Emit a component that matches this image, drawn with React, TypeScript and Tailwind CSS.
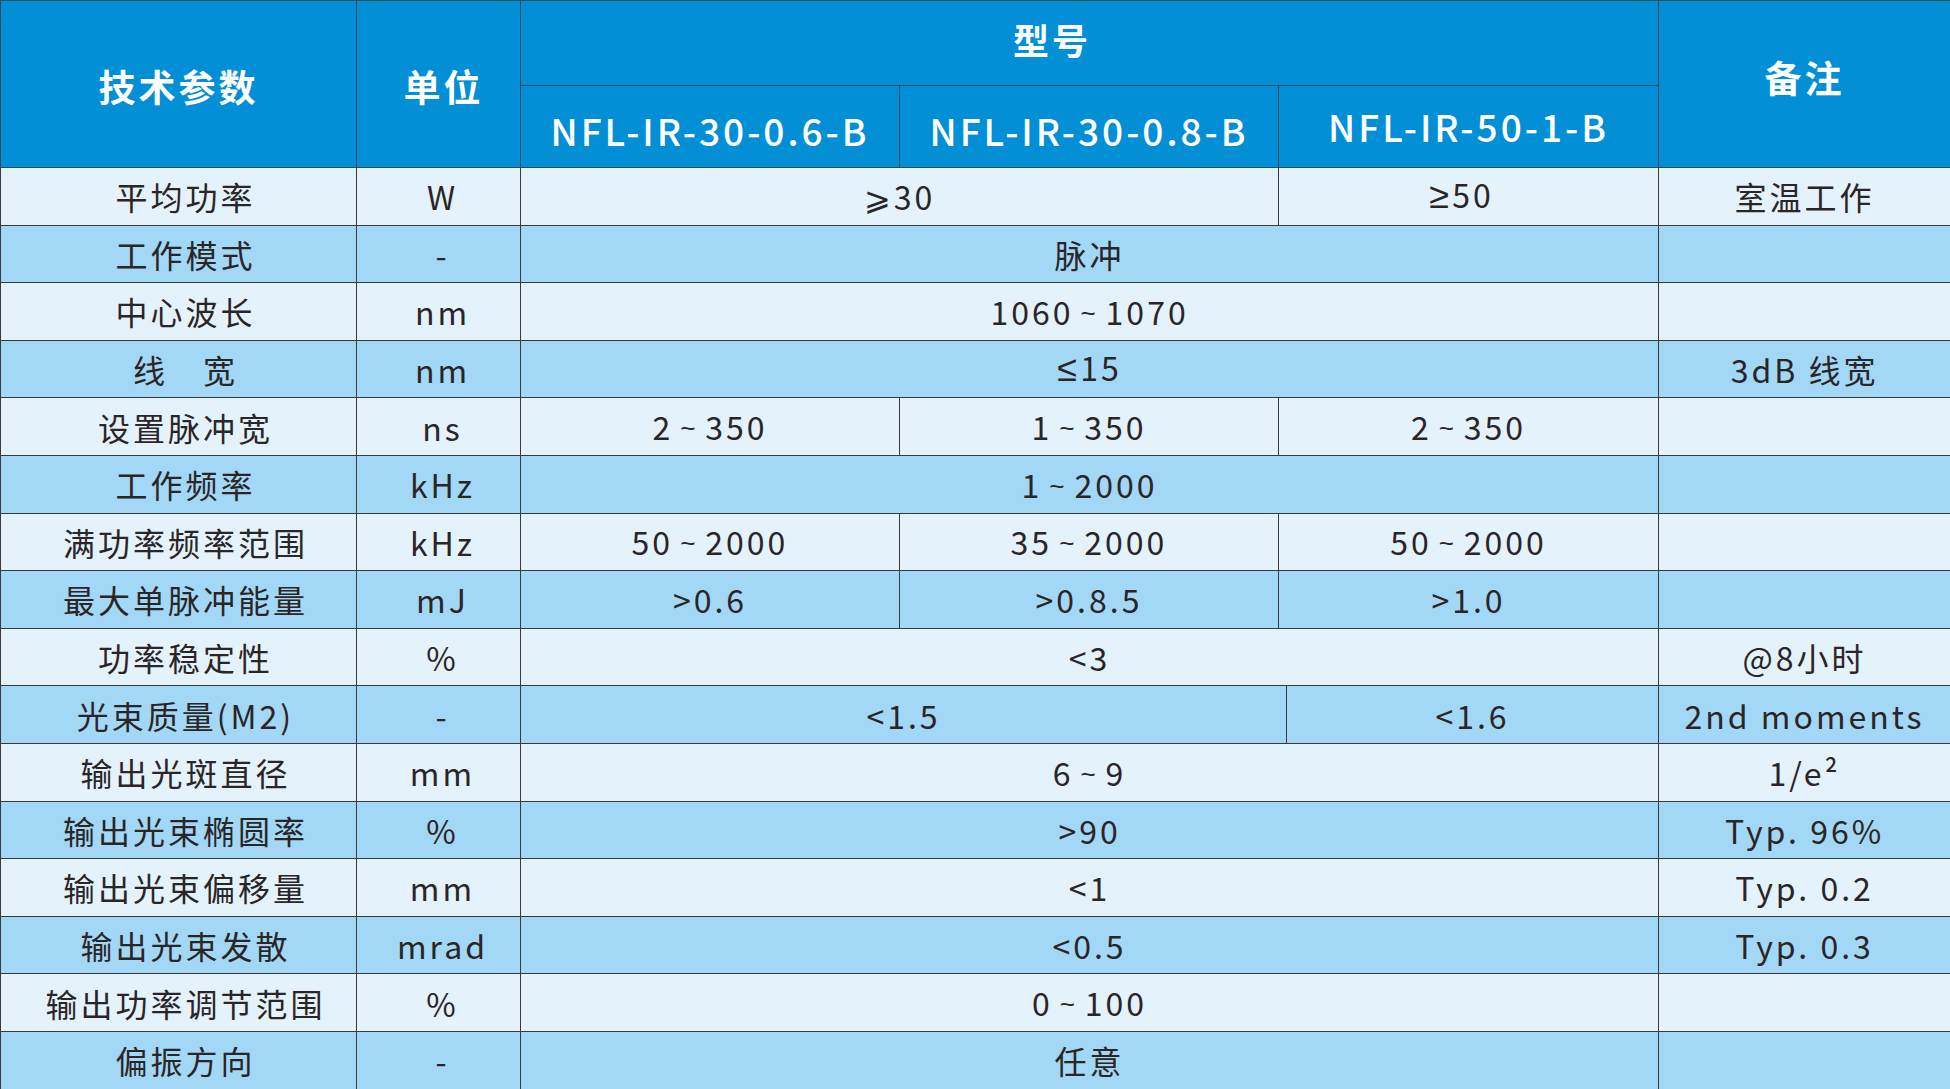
type Cell = { text: string; span?: number };
type Row = { name: string; unit: string; cells: Cell[]; note: string };

const rows: Row[] = [
  { name: "平均功率", unit: "W", cells: [{ text: "⩾30", span: 2 }, { text: "≥50" }], note: "室温工作" },
  { name: "工作模式", unit: "-", cells: [{ text: "脉冲", span: 3 }], note: "" },
  { name: "中心波长", unit: "nm", cells: [{ text: "1060～1070", span: 3 }], note: "" },
  { name: "线　宽", unit: "nm", cells: [{ text: "≤15", span: 3 }], note: "3dB 线宽" },
  { name: "设置脉冲宽", unit: "ns", cells: [{ text: "2～350" }, { text: "1～350" }, { text: "2～350" }], note: "" },
  { name: "工作频率", unit: "kHz", cells: [{ text: "1～2000", span: 3 }], note: "" },
  { name: "满功率频率范围", unit: "kHz", cells: [{ text: "50～2000" }, { text: "35～2000" }, { text: "50～2000" }], note: "" },
  { name: "最大单脉冲能量", unit: "mJ", cells: [{ text: ">0.6" }, { text: ">0.8.5" }, { text: ">1.0" }], note: "" },
  { name: "功率稳定性", unit: "%", cells: [{ text: "<3", span: 3 }], note: "@8小时" },
  { name: "光束质量(M2)", unit: "-", cells: [{ text: "<1.5", span: 2 }, { text: "<1.6" }], note: "2nd moments" },
  { name: "输出光斑直径", unit: "mm", cells: [{ text: "6～9", span: 3 }], note: "1/e²" },
  { name: "输出光束椭圆率", unit: "%", cells: [{ text: ">90", span: 3 }], note: "Typ. 96%" },
  { name: "输出光束偏移量", unit: "mm", cells: [{ text: "<1", span: 3 }], note: "Typ. 0.2" },
  { name: "输出光束发散", unit: "mrad", cells: [{ text: "<0.5", span: 3 }], note: "Typ. 0.3" },
  { name: "输出功率调节范围", unit: "%", cells: [{ text: "0～100", span: 3 }], note: "" },
  { name: "偏振方向", unit: "-", cells: [{ text: "任意", span: 3 }], note: "" },
];

const cellClass = "border border-[#3a3a3a] p-0 text-center align-middle";
const headClass = "border border-[#2a4a5e] p-0 text-center align-middle";

// Small tilde between range numbers, straight-barred ≥ / ≤ from Liberation Sans.
function Value({ text }: { text: string }) {
  if (text.includes("～")) {
    const [a, b] = text.split("～");
    return (
      <>
        {a}
        <span className="relative top-[-3px] mx-[7px] font-['Liberation_Sans',sans-serif] text-[26px]">~</span>
        {b}
      </>
    );
  }
  if (text.startsWith("≥") || text.startsWith("≤")) {
    return (
      <>
        <span className="font-['Liberation_Sans',sans-serif] text-[36px] tracking-[3px]">{text[0]}</span>
        {text.slice(1)}
      </>
    );
  }
  return <>{text}</>;
}

export default function App() {
  return (
    <div className="h-[1089px] w-[1950px] overflow-hidden bg-white font-['Noto_Sans_CJK_SC','Noto_Sans',sans-serif]">
      <table className="w-[1950px] table-fixed border-collapse">
        <colgroup>
          <col className="w-[356px]" />
          <col className="w-[164px]" />
          <col className="w-[379px]" />
          <col className="w-[379px]" />
          <col className="w-[380px]" />
          <col className="w-[292px]" />
        </colgroup>
        <thead className="bg-[#028fd6] text-white">
          <tr className="h-[85px]">
            <th rowSpan={2} className={`${headClass} pt-[6px] text-[37px] font-bold tracking-[3px]`}>
              技术参数
            </th>
            <th rowSpan={2} className={`${headClass} pt-[6px] pl-[10px] text-[37px] font-bold tracking-[3px]`}>
              单位
            </th>
            <th colSpan={3} className={`${headClass} pb-2 pr-[75px] text-[36px] font-bold tracking-[3px]`}>
              型号
            </th>
            <th rowSpan={2} className={`${headClass} pb-[12px] text-[37px] font-bold tracking-[3px]`}>
              备注
            </th>
          </tr>
          <tr className="h-[82px]">
            <th className={`${headClass} pt-2 text-[37px] font-medium tracking-[3px]`}>NFL-IR-30-0.6-B</th>
            <th className={`${headClass} pt-2 text-[37px] font-medium tracking-[3px]`}>NFL-IR-30-0.8-B</th>
            <th className={`${headClass} text-[37px] font-medium tracking-[3px]`}>NFL-IR-50-1-B</th>
          </tr>
        </thead>
        <tbody className="text-[32px] tracking-[3px] text-[#2a2526]">
          {rows.map((row, i) => (
            <tr key={row.name} className={`h-[57.6px] ${i % 2 === 0 ? "bg-[#e4f2fc]" : "bg-[#a2d8f5]"}`}>
              <td className={`${cellClass} pl-[14px]`}>{row.name}</td>
              <td className={`${cellClass} pl-[8px]`}>{row.unit}</td>
              {row.name === "光束质量(M2)" ? (
                <td colSpan={3} className={cellClass}>
                  <div className="flex h-[56.6px]">
                    <div className="flex w-[766px] items-center justify-center border-r border-[#3a3a3a]">
                      {row.cells[0].text}
                    </div>
                    <div className="flex flex-1 items-center justify-center">{row.cells[1].text}</div>
                  </div>
                </td>
              ) : (
                row.cells.map((c, j) => (
                  <td key={j} colSpan={c.span ?? 1} className={`${cellClass} ${c.text.startsWith("≥") ? "pr-[14px]" : ""}`}>
                    <Value text={c.text} />
                  </td>
                ))
              )}
              <td className={cellClass}>{row.note}</td>
            </tr>
          ))}
        </tbody>
      </table>
    </div>
  );
}
